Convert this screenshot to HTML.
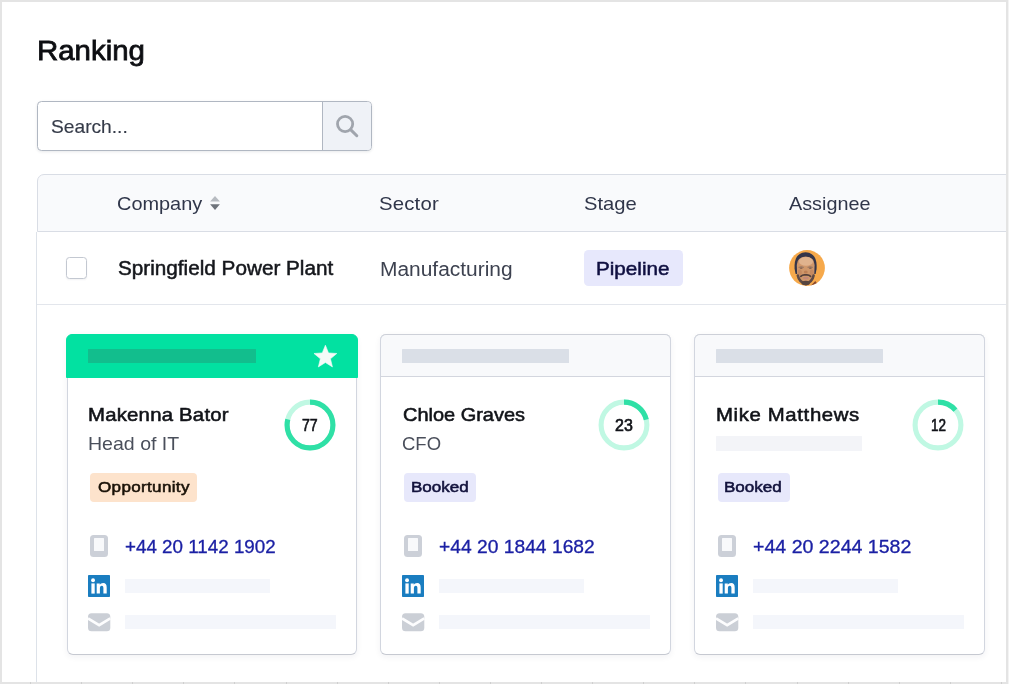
<!DOCTYPE html>
<html lang="en"><head><meta charset="utf-8"><title>Ranking</title>
<style>
*{box-sizing:border-box;margin:0;padding:0}
html,body{width:1009px;height:684px;overflow:hidden;background:#fff}
body{font-family:"Liberation Sans",sans-serif;position:relative}
.abs{position:absolute}
.t{position:absolute;line-height:1;white-space:nowrap;display:block;transform-origin:0 0}
.frame{position:absolute;left:0;top:0;width:1008px;height:684px;border:2px solid #e4e4e4;pointer-events:none;z-index:10}
.frame2{position:absolute;left:1008px;top:0;width:1px;height:684px;background:#f3f3f3;z-index:10}
.search{position:absolute;left:37px;top:101px;width:335px;height:50px;border:1px solid #b0b7c2;border-radius:4.5px;background:#fff;box-shadow:0 1px 3px rgba(30,40,60,.10);overflow:hidden}
.search .btn{position:absolute;left:284px;top:0;width:50px;height:48px;background:#eff2f7;border-left:1px solid #b0b7c2}
.table{position:absolute;left:36px;top:232px;width:980px;height:470px;border:1px solid #dde2e9;border-top:0;background:#fff}
.thead{position:absolute;left:37px;top:174px;width:980px;height:58px;background:#f9fafc;border:1px solid #d9dde5;border-radius:7px 0 0 0}
.row{position:absolute;left:37px;top:304px;width:980px;height:1px;background:#e3e6ec}
.cb{position:absolute;left:66px;top:257px;width:21px;height:22px;border:1px solid #c3c8d1;border-radius:3.5px;background:#fff;box-shadow:0 1px 2px rgba(30,40,60,.06)}
.pill{position:absolute;left:584px;top:250px;width:99px;height:36px;border-radius:4.5px;background:#e7e8fc}
.card{position:absolute;top:334px;width:291px;height:321px;border:1px solid #d2d6df;border-bottom-color:#c6c9d1;border-radius:6px;background:#fff;box-shadow:0 2px 6px rgba(30,40,70,.06)}
.chead{position:absolute;top:334px;width:291px;height:43px;border:1px solid #d2d6df;border-top-color:#cdd0d8;border-bottom:1px solid #d3d6de;border-radius:6px 6px 0 0;background:#f8f9fb}
.chead.g{background:#02e1a1;border-color:#02e1a1}
.bar{position:absolute;border-radius:0.5px}
.badge{position:absolute;border-radius:4px}
.ticks{position:absolute;left:0;top:682px;width:1009px;height:2px;z-index:11}
</style></head><body>

<span class="t " style="left:36.83px;top:35.96px;font-size:28.5px;color:#0d0e12;transform:scaleX(1.0320);-webkit-text-stroke:0.8px #0d0e12;">Ranking</span>
<div class="search"><div class="btn"></div></div>
<span class="t " style="left:51.21px;top:117.11px;font-size:19px;color:#353b49;transform:scaleX(1.0095);-webkit-text-stroke:0.15px #353b49;">Search...</span>
<svg class="abs" style="left:330px;top:110px" width="32" height="32" viewBox="0 0 32 32"><circle cx="15.1" cy="14" r="7.6" fill="none" stroke="#a0a5ad" stroke-width="2.8"/><path d="M20.6 19.6 L26.8 25.7" stroke="#a0a5ad" stroke-width="3" stroke-linecap="round"/></svg>
<div class="table"></div><div class="thead"></div><div class="row"></div>
<span class="t " style="left:116.96px;top:194.53px;font-size:18.5px;color:#30364a;transform:scaleX(1.0762);">Company</span>
<svg class="abs" style="left:208px;top:194px" width="14" height="18" viewBox="0 0 14 18"><path d="M7 1.9 L11.9 7.5 H2.1Z" fill="#b7bbc1"/><path d="M2.1 10.3 H11.9 L7 15.9Z" fill="#6e737b"/></svg>
<span class="t " style="left:379.08px;top:194.53px;font-size:18.5px;color:#30364a;transform:scaleX(1.1000);letter-spacing:0.162px;">Sector</span>
<span class="t " style="left:584.30px;top:194.53px;font-size:18.5px;color:#30364a;transform:scaleX(1.0906);">Stage</span>
<span class="t " style="left:789.00px;top:194.53px;font-size:18.5px;color:#30364a;transform:scaleX(1.0708);">Assignee</span>
<div class="cb"></div>
<span class="t " style="left:118.07px;top:258.98px;font-size:19.5px;color:#15171c;transform:scaleX(1.0620);-webkit-text-stroke:0.5px #15171c;">Springfield Power Plant</span>
<span class="t " style="left:380.30px;top:258.96px;font-size:20px;color:#3d4250;transform:scaleX(1.0458);">Manufacturing</span>
<div class="pill"></div>
<span class="t " style="left:595.72px;top:259.11px;font-size:19px;color:#0f0f40;transform:scaleX(1.0875);-webkit-text-stroke:0.5px #0f0f40;">Pipeline</span>
<svg class="abs" style="left:787px;top:248px" width="40" height="40" viewBox="0 0 40 40">
<defs><clipPath id="av"><circle cx="20" cy="20" r="17.9"/></clipPath><filter id="bl" x="-20%" y="-20%" width="140%" height="140%"><feGaussianBlur stdDeviation="0.7"/></filter></defs>
<circle cx="20" cy="20" r="17.9" fill="#f6a94b"/>
<g clip-path="url(#av)"><g filter="url(#bl)">
<path d="M7.6 21 Q6.6 4.8 18.6 4.2 Q30.6 4.8 29.6 21 L28.6 26 L8.6 26Z" fill="#34354a"/>
<path d="M9.8 17 Q10 9.2 18.7 8.6 Q27.4 9.2 27.6 17 L27.3 26 Q25.8 34.5 18.7 37.4 Q11.6 34.5 10.1 26Z" fill="#cf976b"/>
<ellipse cx="19" cy="13.4" rx="7" ry="4.4" fill="#e0b38d"/>
<ellipse cx="12.8" cy="24.5" rx="2" ry="3" fill="#c58a60"/><ellipse cx="24.8" cy="24.5" rx="2" ry="3" fill="#c58a60"/>
<path d="M10.8 27.5 Q12 33.6 18.7 36.2 Q25.4 33.6 26.6 27.5" stroke="#5e4a44" stroke-width="2.6" fill="none" stroke-linecap="round"/>
<ellipse cx="18.7" cy="35" rx="4.2" ry="2.2" fill="#574540"/>
<path d="M13.8 28.3 Q15.6 26.4 18.7 26.9 Q21.8 26.4 23.6 28.3" stroke="#54403a" stroke-width="1.7" fill="none" stroke-linecap="round"/>
<ellipse cx="18.8" cy="30" rx="2.9" ry="1.3" fill="#c48877"/>
<ellipse cx="18.8" cy="24" rx="1.9" ry="1.6" fill="#bd7f55"/>
<path d="M11.6 19.4 Q14.2 18.1 16.8 19.4 M20.6 19.4 Q23.2 18.1 25.8 19.4" stroke="#8a6f62" stroke-width="0.9" fill="none"/>
<ellipse cx="14.2" cy="20.1" rx="1.5" ry="0.7" fill="#6b544a"/><ellipse cx="23.3" cy="20.1" rx="1.5" ry="0.7" fill="#6b544a"/>
<path d="M23.5 38 L28.3 33 L32 38.5 Z" fill="#8a4a2e"/>
</g></g></svg>
<div class="card first" style="left:67px;width:290px"></div>
<div class="chead g" style="left:66px;width:292px;height:44px"></div>
<div class="bar" style="left:88.2px;top:349px;width:167.5px;height:13.5px;background:#12be8d"></div>
<svg class="abs" style="left:0;top:0" width="1009" height="684"><polygon points="325.40,345.20 328.52,352.91 336.81,353.49 330.44,358.84 332.45,366.91 325.40,362.50 318.35,366.91 320.36,358.84 313.99,353.49 322.28,352.91" fill="#f4fbf8" stroke="#f4fbf8" stroke-width="0.6" stroke-linejoin="round"/></svg>
<span class="t " style="left:88.26px;top:405.73px;font-size:18.5px;color:#111318;transform:scaleX(1.1000);letter-spacing:0.193px;-webkit-text-stroke:0.55px #111318;">Makenna Bator</span>
<span class="t " style="left:87.96px;top:435.23px;font-size:18.5px;color:#4a4f5b;transform:scaleX(1.0560);">Head of IT</span>
<div class="badge" style="left:90px;top:473px;width:107.3px;height:28.5px;background:#fde3cc"></div>
<span class="t " style="left:97.70px;top:479.37px;font-size:15.5px;color:#1a1208;transform:scaleX(1.1000);letter-spacing:0.297px;-webkit-text-stroke:0.55px #1a1208;">Opportunity</span>
<svg class="abs" style="left:282.3px;top:397.2px" width="56" height="56" viewBox="-28 -28 56 56"><circle r="22.9" fill="none" stroke="#c0f8e3" stroke-width="5.1"/><circle r="22.9" fill="none" stroke="#2fe0a6" stroke-width="5.1" stroke-dasharray="112.95 143.88" transform="rotate(-90)"/></svg><span class="t " style="left:302.48px;top:416.72px;font-size:16.5px;color:#111318;transform:scaleX(0.8580);-webkit-text-stroke:0.65px #111318;">77</span>
<div class="abs" style="left:90px;top:535px;width:18px;height:21.6px;border-radius:3.5px;background:#ccd0d8"></div>
<div class="abs" style="left:93.8px;top:537.8px;width:10.6px;height:13.6px;border-radius:0.5px;background:#f8f9fb"></div>
<span class="t " style="left:124.95px;top:536.71px;font-size:19px;color:#1b20a4;transform:scaleX(0.9896);-webkit-text-stroke:0.3px #1b20a4;">+44 20 1142 1902</span>
<div class="abs" style="left:88px;top:575px;width:22px;height:22px;border-radius:0.8px;background:#1a7dc0"></div>
<svg class="abs" style="left:88px;top:575px" width="22" height="22" viewBox="0 0 22 22"><g fill="#fff"><rect x="3.4" y="8.4" width="3.3" height="10.2"/><circle cx="5.05" cy="5.2" r="1.95"/><path d="M8.7 8.4h3.1v1.5c.6-1.1 1.8-1.8 3.3-1.8 2.7 0 3.6 1.7 3.6 4.4v6.1h-3.3v-5.4c0-1.4-.3-2.4-1.6-2.4-1.4 0-1.9 1-1.9 2.4v5.4H8.7z"/></g></svg>
<div class="bar" style="left:124.8px;top:578.5px;width:145.5px;height:14.5px;background:#f4f6fb"></div>
<svg class="abs" style="left:88px;top:613px" width="23" height="19" viewBox="0 0 23 19"><rect x="0" y="0.2" width="22.3" height="18" rx="3.5" fill="#cbcfd6"/><path d="M0 5.4 L11.15 12.2 L22.3 5.4" fill="none" stroke="#fdfdfe" stroke-width="2.6"/></svg>
<div class="bar" style="left:124.8px;top:615px;width:211.5px;height:14px;background:#f4f6fb"></div>
<div class="card" style="left:380px;width:291px"></div>
<div class="chead" style="left:380px;width:291px"></div>
<div class="bar" style="left:402.2px;top:349px;width:167.3px;height:13.5px;background:#dadfe7"></div>
<span class="t " style="left:403.10px;top:405.73px;font-size:18.5px;color:#111318;transform:scaleX(1.0787);-webkit-text-stroke:0.55px #111318;">Chloe Graves</span>
<span class="t " style="left:401.96px;top:435.23px;font-size:18.5px;color:#4a4f5b;transform:scaleX(0.9997);">CFO</span>
<div class="badge" style="left:404px;top:473px;width:72.3px;height:28.5px;background:#e7e8fb"></div>
<span class="t " style="left:410.75px;top:479.37px;font-size:15.5px;color:#12123c;transform:scaleX(1.0996);-webkit-text-stroke:0.55px #12123c;">Booked</span>
<svg class="abs" style="left:596.3px;top:397.2px" width="56" height="56" viewBox="-28 -28 56 56"><circle r="22.9" fill="none" stroke="#c0f8e3" stroke-width="5.1"/><circle r="22.9" fill="none" stroke="#2fe0a6" stroke-width="5.1" stroke-dasharray="30.22 143.88" transform="rotate(-90)"/></svg><span class="t " style="left:615.31px;top:416.72px;font-size:16.5px;color:#111318;transform:scaleX(0.9685);-webkit-text-stroke:0.65px #111318;">23</span>
<div class="abs" style="left:404px;top:535px;width:18px;height:21.6px;border-radius:3.5px;background:#ccd0d8"></div>
<div class="abs" style="left:407.8px;top:537.8px;width:10.6px;height:13.6px;border-radius:0.5px;background:#f8f9fb"></div>
<span class="t " style="left:438.95px;top:536.71px;font-size:19px;color:#1b20a4;transform:scaleX(1.0131);-webkit-text-stroke:0.3px #1b20a4;">+44 20 1844 1682</span>
<div class="abs" style="left:402px;top:575px;width:22px;height:22px;border-radius:0.8px;background:#1a7dc0"></div>
<svg class="abs" style="left:402px;top:575px" width="22" height="22" viewBox="0 0 22 22"><g fill="#fff"><rect x="3.4" y="8.4" width="3.3" height="10.2"/><circle cx="5.05" cy="5.2" r="1.95"/><path d="M8.7 8.4h3.1v1.5c.6-1.1 1.8-1.8 3.3-1.8 2.7 0 3.6 1.7 3.6 4.4v6.1h-3.3v-5.4c0-1.4-.3-2.4-1.6-2.4-1.4 0-1.9 1-1.9 2.4v5.4H8.7z"/></g></svg>
<div class="bar" style="left:438.8px;top:578.5px;width:145.5px;height:14.5px;background:#f4f6fb"></div>
<svg class="abs" style="left:402px;top:613px" width="23" height="19" viewBox="0 0 23 19"><rect x="0" y="0.2" width="22.3" height="18" rx="3.5" fill="#cbcfd6"/><path d="M0 5.4 L11.15 12.2 L22.3 5.4" fill="none" stroke="#fdfdfe" stroke-width="2.6"/></svg>
<div class="bar" style="left:438.8px;top:615px;width:211.5px;height:14px;background:#f4f6fb"></div>
<div class="card" style="left:694px;width:291px"></div>
<div class="chead" style="left:694px;width:291px"></div>
<div class="bar" style="left:715.9000000000001px;top:349px;width:167.3px;height:13.5px;background:#dadfe7"></div>
<span class="t " style="left:715.75px;top:405.73px;font-size:18.5px;color:#111318;transform:scaleX(1.1000);letter-spacing:0.574px;-webkit-text-stroke:0.55px #111318;">Mike Matthews</span>
<div class="bar" style="left:716.0px;top:436.3px;width:146px;height:14.5px;background:#f3f4f8"></div>
<div class="badge" style="left:717.7px;top:473px;width:72.2px;height:28.5px;background:#e7e8fb"></div>
<span class="t " style="left:724.16px;top:479.37px;font-size:15.5px;color:#12123c;transform:scaleX(1.0996);-webkit-text-stroke:0.55px #12123c;">Booked</span>
<svg class="abs" style="left:910.0px;top:397.2px" width="56" height="56" viewBox="-28 -28 56 56"><circle r="22.9" fill="none" stroke="#c0f8e3" stroke-width="5.1"/><circle r="22.9" fill="none" stroke="#2fe0a6" stroke-width="5.1" stroke-dasharray="19.71 143.88" transform="rotate(-90)"/></svg><span class="t " style="left:930.77px;top:416.72px;font-size:16.5px;color:#111318;transform:scaleX(0.8175);-webkit-text-stroke:0.65px #111318;">12</span>
<div class="abs" style="left:717.7px;top:535px;width:18px;height:21.6px;border-radius:3.5px;background:#ccd0d8"></div>
<div class="abs" style="left:721.5px;top:537.8px;width:10.6px;height:13.6px;border-radius:0.5px;background:#f8f9fb"></div>
<span class="t " style="left:752.65px;top:536.71px;font-size:19px;color:#1b20a4;transform:scaleX(1.0303);-webkit-text-stroke:0.3px #1b20a4;">+44 20 2244 1582</span>
<div class="abs" style="left:715.7px;top:575px;width:22px;height:22px;border-radius:0.8px;background:#1a7dc0"></div>
<svg class="abs" style="left:715.7px;top:575px" width="22" height="22" viewBox="0 0 22 22"><g fill="#fff"><rect x="3.4" y="8.4" width="3.3" height="10.2"/><circle cx="5.05" cy="5.2" r="1.95"/><path d="M8.7 8.4h3.1v1.5c.6-1.1 1.8-1.8 3.3-1.8 2.7 0 3.6 1.7 3.6 4.4v6.1h-3.3v-5.4c0-1.4-.3-2.4-1.6-2.4-1.4 0-1.9 1-1.9 2.4v5.4H8.7z"/></g></svg>
<div class="bar" style="left:752.5px;top:578.5px;width:145.5px;height:14.5px;background:#f4f6fb"></div>
<svg class="abs" style="left:715.7px;top:613px" width="23" height="19" viewBox="0 0 23 19"><rect x="0" y="0.2" width="22.3" height="18" rx="3.5" fill="#cbcfd6"/><path d="M0 5.4 L11.15 12.2 L22.3 5.4" fill="none" stroke="#fdfdfe" stroke-width="2.6"/></svg>
<div class="bar" style="left:752.5px;top:615px;width:211.5px;height:14px;background:#f4f6fb"></div>
<div class="frame"></div><div class="frame2"></div>
<div class="ticks" style="background:repeating-linear-gradient(90deg,transparent 0,transparent 30px,#cfcfcf 30px,#cfcfcf 31px,transparent 31px,transparent 51.1px)"></div>
</body></html>
